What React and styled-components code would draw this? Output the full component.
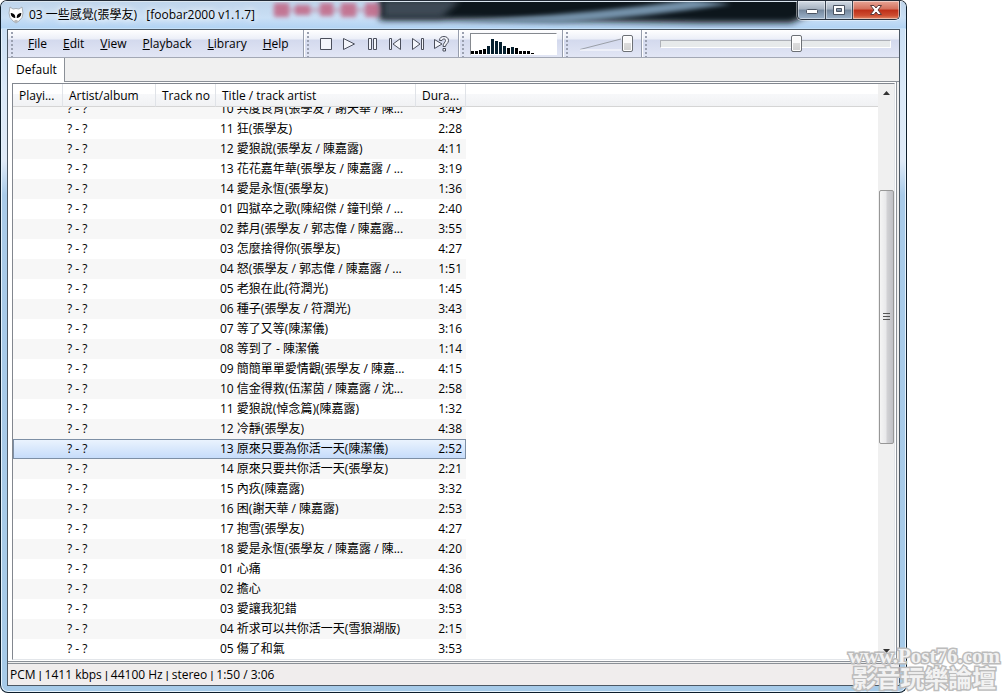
import React, { Fragment, useLayoutEffect, useRef } from "react";
import styled, { createGlobalStyle, css } from "styled-components";

const Global = createGlobalStyle`
  *, *::before, *::after { box-sizing: border-box; }
  html, body { margin: 0; background: #fff; }
  body, button, input, table {
    font-family: "Open Sans", "Noto Sans CJK TC", sans-serif;
    font-size: 12px;
    color: #000;
  }
`;

const Page = styled.main`
  position: relative;
  height: 100vh;
  min-height: 320px;
  overflow: hidden;
`;

const Frame = styled.section`
  display: flex;
  flex-direction: column;
  width: 90%;
  height: 100%;
  padding: 0 6px 6px;
  border: 1px solid #0d1d2b;
  border-top-color: #222a35;
  border-radius: 7px 7px 8px 8px;
  background:
    linear-gradient(#c3dbf3 0, #dbe9f8 90px, #dfeaf7 160px, #a9cbe9 194px, #a6cae8 100%);
  box-shadow: inset 0 0 0 1px #e6f3fd;
  overflow: hidden;
`;

const TitleBar = styled.header`
  position: relative;
  display: flex;
  align-items: center;
  flex: none;
  height: 28px;
  margin: 0 -6px;
  padding-left: 7px;
  background: linear-gradient(#bfd4ea, #c9dff5 60%, #b0d2f3);
`;

const Backdrop = styled.svg`
  position: absolute;
  inset: 0;
  width: 100%;
  height: 100%;
`;

const Caption = styled.h1`
  position: relative;
  margin: 0 0 0 5px;
  font-size: 12px;
  font-weight: 400;
  line-height: 20px;
  white-space: pre;
  text-shadow: 0 0 6px #fff, 0 0 8px #fff;
`;

const Logo = styled.svg`
  position: relative;
  width: 16px;
  height: 18px;
`;

const Captions = styled.div`
  position: absolute;
  top: 0;
  right: 6px;
  display: flex;
  height: 19px;
  border: 1px solid #28323e;
  border-top: 0;
  border-radius: 0 0 5px 5px;
  overflow: hidden;
  box-shadow: 0 0 0 1px #ffffff70;
`;

const CaptionButton = styled.button`
  display: grid;
  place-items: center;
  width: ${(p) => (p.$close ? 47 : 27)}px;
  padding: 0;
  border: 0;
  border-left: ${(p) => (p.$first ? "0" : "1px solid #3b4653")};
  background: ${(p) =>
    p.$close
      ? "linear-gradient(#e8a596, #d4705c 45%, #bd2f18 50%, #cd4c30 80%, #e08a68)"
      : "linear-gradient(#d4dce5, #a6b2c0 45%, #74879c 50%, #9db4cc)"};
  box-shadow: inset 0 0 0 1px #ffffff70;
`;

const Client = styled.div`
  display: flex;
  flex-direction: column;
  flex: 1;
  min-height: 0;
  border: 1px solid #4c5864;
  background: #f0f0f0;
`;

const ToolRow = styled.div`
  display: flex;
  flex: none;
  height: 28px;
  border-bottom: 1px solid #a3a8b5;
  background: linear-gradient(#fff 0, #eceff8 9px, #d3d9ed 10px, #e2e6f5 100%);
`;

const Band = styled.div`
  display: flex;
  align-items: center;
  flex: ${(p) => (p.$grow ? "1" : "none")};
  min-width: 0;
  padding-right: ${(p) => p.$end}px;
  border-right: ${(p) => (p.$grow ? "0" : "1px solid #979ead")};
  box-shadow: ${(p) => (p.$grow ? "none" : "1px 0 0 #fff")};

  &::before {
    content: "";
    flex: none;
    align-self: stretch;
    width: 3px;
    margin: 2px ${(p) => p.$start}px 0 3px;
    background: radial-gradient(circle at 1px 1px, #9aa0b0 1px, transparent 1px) 0 0 / 3px 4px;
  }
`;

const MenuItem = styled.button`
  height: 22px;
  margin-right: ${(p) => (p.$last ? 0 : 16)}px;
  padding: 0;
  border: 0;
  background: none;
  line-height: 20px;

  &::first-letter { text-decoration: underline; }
`;

const PlayButton = styled.button`
  display: grid;
  place-items: center;
  width: 23px;
  height: 22px;
  padding: 0;
  border: 0;
  background: none;
`;

const Spectrum = styled.svg`
  width: 87px;
  height: 22px;
  border: 1px solid #85898f;
  border-right-color: #fff;
  border-bottom-color: #fff;
  background: #fff;
`;

const Slider = styled.input`
  appearance: none;
  position: relative;
  width: 100%;
  height: 17px;
  margin: 0;
  background: none;

  &::-webkit-slider-runnable-track {
    height: ${(p) => (p.$bare ? 17 : 8)}px;
    border: ${(p) => (p.$bare ? "0" : "1px solid #aeb1b8")};
    border-right-color: #fff;
    border-bottom-color: #fff;
    background: ${(p) => (p.$bare ? "none" : "#e7eaeb")};
  }
  &::-webkit-slider-thumb {
    appearance: none;
    width: 11px;
    height: 17px;
    margin-top: ${(p) => (p.$bare ? 0 : -6)}px;
    border: 1px solid #6c7075;
    border-radius: 2px;
    background: linear-gradient(#fafafa 0 50%, #dcdcdc 50%, #d0d0d0);
    box-shadow: inset 0 0 0 1px #fff;
  }
`;

const Volume = styled.div`
  position: relative;
  display: flex;
  width: 54px;
`;

const Wedge = styled.svg`
  position: absolute;
  left: 0;
  top: 0;
  width: 54px;
  height: 17px;
`;

const Tabs = styled.nav`
  display: flex;
  flex: none;
  height: 24px;
`;

const Tab = styled.button`
  padding: 0 7px 1px 8px;
  border: 0;
  border-right: 1px solid #8b9097;
  background: #fff;
  line-height: 20px;
`;

const TabSpace = styled.div`
  flex: 1;
  border-bottom: 1px solid #8b9097;
`;

const Panel = styled.div`
  display: flex;
  flex: 1;
  min-height: 0;
  padding: 1px 1px 1px 4px;
  margin-right: 2px;
  border-right: 1px solid #8b9097;
  border-bottom: 1px solid #8b9097;
  background: #fff;
`;

const ListBox = styled.div`
  display: flex;
  flex: 1;
  min-width: 0;
  border: 1px solid #82878f;
  border-right-color: #e3e6ea;
  border-bottom-color: #e3e6ea;
`;

const Scroller = styled.div`
  flex: 1;
  min-width: 0;
  padding-bottom: 12px;
  overflow-y: auto;
  scrollbar-width: none;
`;

const Table = styled.table`
  width: 100%;
  table-layout: fixed;
  border-collapse: separate;
  border-spacing: 0;
`;

const Head = styled.th`
  position: sticky;
  top: 0;
  z-index: 1;
  width: ${(p) => (p.$w ? `${p.$w}px` : "auto")};
  height: 23px;
  padding: 2px 6px 0;
  border-right: ${(p) => (p.$w ? "1px solid #e0e3e8" : "0")};
  border-bottom: 1px solid #d5d5d5;
  background: linear-gradient(#fff 0 45%, #f7f8fa 46%, #f1f2f4);
  font-weight: 400;
  line-height: 20px;
  text-align: ${(p) => p.$align || "left"};
  white-space: nowrap;
`;

const Cell = styled.td`
  height: 20px;
  padding: 0 4px;
  line-height: 18px;
  text-align: ${(p) => p.$align || "left"};
  white-space: nowrap;
`;

const Row = styled.tr`
  &:nth-child(odd) ${Cell}:not(:last-child) { background: #f7f7f7; }
  ${(p) =>
    p.$selected &&
    css`
      && ${Cell}:not(:last-child) {
        border: solid #7d8fa5;
        border-width: 1px 0;
        background: linear-gradient(#eaf3fe, #c6dcfa);
      }
      && ${Cell}:first-child { border-left-width: 1px; }
      && ${Cell}:nth-child(5) { border-right-width: 1px; padding-right: 3px; }
    `}
`;

const ScrollBar = styled.div`
  display: flex;
  flex-direction: column;
  align-items: center;
  flex: none;
  width: 16px;
  background: #f0f0f0;
`;

const ScrollArrow = styled.button`
  display: grid;
  place-items: center;
  width: 16px;
  height: 17px;
  padding: 0;
  border: 0;
  background: none;
`;

const ScrollSpace = styled.div`
  flex: ${(p) => p.$share} 0 0;
`;

const ScrollThumb = styled.div`
  display: grid;
  place-items: center;
  flex: 254 0 0;
  width: 15px;
  border: 1px solid #979797;
  border-radius: 2px;
  background: linear-gradient(90deg, #f5f5f5, #e9e9eb 45%, #d2d2d5 55%, #bfc0c5);
`;

const StatusBar = styled.footer`
  flex: none;
  height: 22px;
  margin-top: 1px;
  padding: 0 2px;
  border-top: 1px solid #8b9097;
  background: #f0eded;
  line-height: 21px;
  white-space: pre;
`;

const Divider = styled.span`
  font-family: "Liberation Sans", sans-serif;
  font-size: 11px;
`;

const Watermark = styled.div`
  position: absolute;
  right: 8px;
  bottom: 1px;
  color: #ffffffd0;
  font-weight: 700;
  text-align: center;
  white-space: nowrap;
  paint-order: stroke fill;
  -webkit-text-stroke: 3px #bcbcbc;
  pointer-events: none;
`;

const SiteName = styled.div`
  font-family: "Liberation Serif", serif;
  font-size: 21px;
  line-height: 12px;
`;

const ForumName = styled.div`
  font-family: "Noto Sans CJK TC", sans-serif;
  font-size: 24px;
  line-height: 30px;
`;

const tracks = [
  ["10 共度良宵(張學友 / 謝天華 / 陳...", "3:49"],
  ["11 狂(張學友)", "2:28"],
  ["12 愛狼說(張學友 / 陳嘉露)", "4:11"],
  ["13 花花嘉年華(張學友 / 陳嘉露 / ...", "3:19"],
  ["14 愛是永恆(張學友)", "1:36"],
  ["01 四獄卒之歌(陳紹傑 / 鐘刊榮 / ...", "2:40"],
  ["02 葬月(張學友 / 郭志偉 / 陳嘉露...", "3:55"],
  ["03 怎麼捨得你(張學友)", "4:27"],
  ["04 怒(張學友 / 郭志偉 / 陳嘉露 / ...", "1:51"],
  ["05 老狼在此(符潤光)", "1:45"],
  ["06 種子(張學友 / 符潤光)", "3:43"],
  ["07 等了又等(陳潔儀)", "3:16"],
  ["08 等到了 - 陳潔儀", "1:14"],
  ["09 簡簡單單愛情觀(張學友 / 陳嘉...", "4:15"],
  ["10 信金得救(伍潔茵 / 陳嘉露 / 沈...", "2:58"],
  ["11 愛狼說(悼念篇)(陳嘉露)", "1:32"],
  ["12 冷靜(張學友)", "4:38"],
  ["13 原來只要為你活一天(陳潔儀)", "2:52"],
  ["14 原來只要共你活一天(張學友)", "2:21"],
  ["15 內疚(陳嘉露)", "3:32"],
  ["16 困(謝天華 / 陳嘉露)", "2:53"],
  ["17 抱雪(張學友)", "4:27"],
  ["18 愛是永恆(張學友 / 陳嘉露 / 陳...", "4:20"],
  ["01 心痛", "4:36"],
  ["02 擔心", "4:08"],
  ["03 愛讓我犯錯", "3:53"],
  ["04 祈求可以共你活一天(雪狼湖版)", "2:15"],
  ["05 傷了和氣", "3:53"],
];
const selectedTrack = 17;

const menus = ["File", "Edit", "View", "Playback", "Library", "Help"];

const status = ["PCM", "1411 kbps", "44100 Hz", "stereo", "1:50 / 3:06"];

const playIcons = [
  ["Stop", <path d="M2.5 2.5h11v11h-11z" />],
  ["Play", <path d="M2.5 2.5v11L13.5 8z" />],
  ["Pause", <path d="M4.500 2.500h3v11h-3zM9.500 2.500h3v11h-3z" />],
  ["Previous", <path d="M2.500 2.500h2v11h-2zM13.500 2.500v11L6 8z" />],
  ["Next", <path d="M11.500 2.500h2v11h-2zM2.500 2.500v11L10 8z" />],
  [
    "Random",
    <>
      <path d="M1.500 3.500v9L9 8z" />
      <path d="M6.500 4.500C6.500 1.500 8.500.5 11 .5s4.500 1.500 4.500 4c0 3-3 3.500-3 6h-2.500c0-3.500 2.500-4 2.500-6 0-1-.5-1.500-1.500-1.500S9 3.500 9 4.500zM10 12.500h2.500v2.500H10z" />
    </>,
  ],
];

const bars = [3, 3, 4, 5, 8, 15, 13, 12, 8, 6, 7, 6, 3, 3, 3, 1];

export default function App() {
  const scroller = useRef(null);
  useLayoutEffect(() => {
    scroller.current.scrollTop = 8;
  }, []);

  return (
    <Page>
      <Global />
      <Frame>
        <TitleBar>
          <Backdrop viewBox="0 0 905 28" preserveAspectRatio="none" aria-hidden="true">
            <defs>
              <filter id="soft" x="-20%" y="-60%" width="140%" height="220%">
                <feGaussianBlur stdDeviation="3" />
              </filter>
              <filter id="smudge" x="-20%" y="-60%" width="140%" height="220%">
                <feGaussianBlur stdDeviation="2" />
              </filter>
            </defs>
            <path d="M378 -8H812V12L790 22H700L560 20 460 19H378z" fill="#10161f" filter="url(#soft)" />
            <path d="M382 -2H460L440 17H382z" fill="#3d4a55" filter="url(#soft)" />
            <path d="M450 20Q570 15 690 -1L730 3Q640 16 560 22z" fill="#7592aa" filter="url(#smudge)" />
            <g fill="#c25d7d" opacity=".8" filter="url(#smudge)">
              <path d="M273 2h15v14h-15zM294 4h15v10h-15zM319 2h13v13h-13zM340 2h15v14h-15zM364 2h14v14h-14z" />
              <path d="M272 7h108v4H272z" opacity=".5" />
            </g>
            <path d="M0 .5H905" stroke="#dbe6f0" />
            <path d="M0 27.500H905" stroke="#c5e0f8" />
          </Backdrop>
          <Logo viewBox="0 0 16 18" aria-hidden="true">
            <path d="M2 1l3 2q3-1 6 0l3-2 1 6q0 5-4 8l-3 2-3-2q-4-3-4-8z" fill="#fff" stroke="#a5adb5" />
            <path d="M3 7.500q4 0 4 4-3.500 0-4-4zM13 7.500q-4 0-4 4 3.500 0 4-4z" fill="#050505" stroke="#050505" />
            <path d="M6.500 15h3" stroke="#777" />
          </Logo>
          <Caption>{"03 一些感覺(張學友)   [foobar2000 v1.1.7]"}</Caption>
          <Captions>
            <CaptionButton $first aria-label="Minimize">
              <svg width="14" height="10"><rect x="1.500" y="4.500" width="11" height="4" rx="1" fill="#fff" stroke="#4a5360" /></svg>
            </CaptionButton>
            <CaptionButton aria-label="Maximize">
              <svg width="14" height="12"><path fillRule="evenodd" d="M1.500 1.500h11v9h-11zM4.500 4.500h5v3h-5z" fill="#fff" stroke="#4a5360" /></svg>
            </CaptionButton>
            <CaptionButton $close aria-label="Close">
              <svg width="14" height="12"><path d="M1.500 1.500h3.500L7 4l2-2.500h3.500L9 6l3.500 4.500H9L7 8l-2 2.500H1.500L5 6z" fill="#fff" stroke="#5a3a3a" /></svg>
            </CaptionButton>
          </Captions>
        </TitleBar>

        <Client>
          <ToolRow>
            <Band $start={14} $end={14}>
              {menus.map((m, i) => (
                <MenuItem key={m} $last={i === menus.length - 1}>{m}</MenuItem>
              ))}
            </Band>
            <Band $start={5} $end={5}>
              {playIcons.map(([name, icon]) => (
                <PlayButton key={name} aria-label={name}>
                  <svg width="16" height="16" fill="#f3f5fb" stroke="#4b4f5c">{icon}</svg>
                </PlayButton>
              ))}
            </Band>
            <Band $start={5} $end={5}>
              <Spectrum aria-hidden="true">
                {bars.map((h, i) => (
                  <rect key={i} x={i * 4} y={20 - h} width="3" height={h} fill={h > 6 ? "#06202f" : "#000"} />
                ))}
              </Spectrum>
            </Band>
            <Band $start={10} $end={8}>
              <Volume>
                <Wedge aria-hidden="true">
                  <path d="M1 14.500L42 4" stroke="#9a9fa8" fill="none" />
                  <path d="M1 15H42" stroke="#fff" fill="none" />
                </Wedge>
                <Slider $bare type="range" aria-label="Volume" min="0" max="100" defaultValue="100" />
              </Volume>
            </Band>
            <Band $grow $start={12} $end={8}>
              <Slider type="range" aria-label="Seek" min="0" max="186" defaultValue="111" />
            </Band>
          </ToolRow>

          <Tabs>
            <Tab>Default</Tab>
            <TabSpace />
          </Tabs>

          <Panel>
            <ListBox>
              <Scroller ref={scroller}>
                <Table>
                  <thead>
                    <tr>
                      <Head $w={50}>Playi...</Head>
                      <Head $w={93}>Artist/album</Head>
                      <Head $w={60}>Track no</Head>
                      <Head $w={200}>Title / track artist</Head>
                      <Head $w={50} $align="right">Dura...</Head>
                      <Head />
                    </tr>
                  </thead>
                  <tbody>
                    {tracks.map(([title, time], i) => (
                      <Row key={i} $selected={i === selectedTrack}>
                        <Cell />
                        <Cell>? - ?</Cell>
                        <Cell />
                        <Cell>{title}</Cell>
                        <Cell $align="right">{time}</Cell>
                        <Cell />
                      </Row>
                    ))}
                  </tbody>
                </Table>
              </Scroller>
              <ScrollBar>
                <ScrollArrow aria-label="Scroll up">
                  <svg width="7" height="4"><path d="M0 4L3.500 0 7 4z" fill="#333" /></svg>
                </ScrollArrow>
                <ScrollSpace $share={89} />
                <ScrollThumb>
                  <svg width="7" height="8"><path d="M0 .5h7M0 3.500h7M0 6.500h7" stroke="#555" /></svg>
                </ScrollThumb>
                <ScrollSpace $share={199} />
                <ScrollArrow aria-label="Scroll down">
                  <svg width="7" height="4"><path d="M0 0h7L3.500 4z" fill="#333" /></svg>
                </ScrollArrow>
              </ScrollBar>
            </ListBox>
          </Panel>

          <StatusBar>
            {status.map((s, i) => (
              <Fragment key={s}>
                {i > 0 && <Divider>{" | "}</Divider>}
                {s}
              </Fragment>
            ))}
          </StatusBar>
        </Client>
      </Frame>
      <Watermark>
        <SiteName>www.Post76.com</SiteName>
        <ForumName>影音玩樂論壇</ForumName>
      </Watermark>
    </Page>
  );
}
